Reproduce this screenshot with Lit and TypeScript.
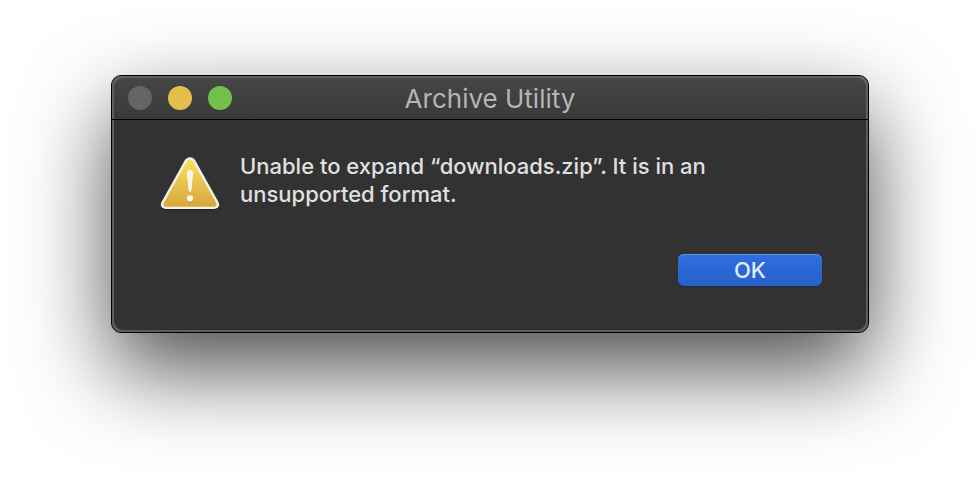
import { LitElement, html, css } from "lit";
import { customElement, property } from "lit/decorators.js";

@customElement("warning-icon")
class WarningIcon extends LitElement {
  static styles = css`
    :host { display: block; flex: none; width: 60px; height: 56px; }
    svg { display: block; width: 100%; height: 100%; }
  `;
  render() {
    return html`
      <svg viewBox="0 0 60 56" role="img" aria-label="Warning">
        <defs>
          <linearGradient id="fill" x1="0" y1="0" x2="0" y2="1">
            <stop offset="0" stop-color="#fae258" />
            <stop offset="0.5" stop-color="#e8c34f" />
            <stop offset="1" stop-color="#d6a93b" />
          </linearGradient>
        </defs>
        <path d="M24.800 5.500C27.200 1.400 32.800 1.400 35.200 5.500L58.200 46.500C60.500 50.800 58.500 54.200 54 54.200H6C1.500 54.200 -.5 50.800 1.800 46.500Z" fill="#181818" opacity=".5" />
        <path d="M24.800 4.200C27.200 .1 32.800 .1 35.200 4.200L58.200 45.500C60.500 49.800 58.500 53 54 53H6C1.500 53 -.5 49.800 1.800 45.500Z" fill="#f4f1e8" />
        <path d="M26.800 5.800C28.400 3.200 31.600 3.200 33.200 5.800L56 46.500C57.400 49.200 56.300 50.700 53.500 50.700H6.500C3.700 50.700 2.600 49.200 4 46.500Z" fill="url(#fill)" />
        <path d="M26.600 18Q26.800 15 30 15Q33.400 15 33.400 18L31.700 34Q31.400 36.500 30 36.500Q28.600 36.500 28.300 34Z" fill="#b98b2b" />
        <circle cx="30" cy="43.300" r="3.400" fill="#b98b2b" />
        <path d="M26.600 17Q26.800 14 30 14Q33.400 14 33.400 17L31.700 33.500Q31.400 36 30 36Q28.600 36 28.300 33.500Z" fill="#faf6e6" />
        <circle cx="30" cy="42.400" r="3.200" fill="#faf6e6" />
      </svg>
    `;
  }
}

@customElement("app-root")
class AppRoot extends LitElement {
  @property() heading = "Archive Utility";
  @property() message = "Unable to expand “downloads.zip”. It is in an unsupported format.";

  static styles = css`
    :host {
      display: flow-root;
      overflow: hidden;
      box-sizing: border-box;
      min-height: 100vh;
      padding: 75px 111px;
      background: #fff;
      font-family: Inter, "Liberation Sans", sans-serif;
    }
    .window {
      border: 1px solid #000;
      border-radius: 10px;
      background: #323232;
      box-shadow: 0 36px 88px rgba(0, 0, 0, 0.7);
    }
    .titlebar {
      display: grid;
      grid-template-columns: 1fr auto 1fr;
      align-items: center;
      height: 43px;
      padding: 0 16px;
      border-bottom: 1px solid #000;
      border-radius: 9px 9px 0 0;
      background: linear-gradient(#474747, #393939);
      box-shadow: inset 2px 2px #606060, inset -2px 2px #606060;
    }
    .controls { display: flex; gap: 16px; }
    .control {
      width: 24px;
      height: 24px;
      padding: 0;
      border: 0;
      border-radius: 50%;
    }
    .close { background: #656565; }
    .minimize { background: #e3c04d; }
    .zoom { background: #73c04b; }
    h1 {
      margin: 0;
      padding-top: 2px;
      font-size: 26px;
      line-height: 32px;
      font-weight: 400;
      color: #b5b5b5;
    }
    .body {
      padding: 32px 46px 46px 48px;
      border-radius: 0 0 9px 9px;
      box-shadow: inset 2px -2px #5c5c5c, inset -2px -2px #5c5c5c;
    }
    .alert { display: flex; gap: 20px; }
    warning-icon { margin-top: 4px; }
    p {
      margin: 0;
      font-size: 22px;
      line-height: 28px;
      font-weight: 500;
      color: #e0e0e0;
    }
    .actions { display: flex; justify-content: flex-end; margin-top: 42px; }
    .ok {
      width: 144px;
      height: 32px;
      padding: 0;
      border: 0;
      border-radius: 6px;
      background: linear-gradient(#2f6fde, #2760ca);
      box-shadow: inset 0 1px #6293e5, 0 1px 1px #1c2940;
      font: 500 22px/32px Inter, "Liberation Sans", sans-serif;
      color: #e2ecfb;
    }
  `;

  render() {
    return html`
      <section class="window" role="alertdialog" aria-labelledby="title" aria-describedby="message">
        <header class="titlebar">
          <div class="controls">
            <button class="control close" aria-label="Close"></button>
            <button class="control minimize" aria-label="Minimize"></button>
            <button class="control zoom" aria-label="Zoom"></button>
          </div>
          <h1 id="title">${this.heading}</h1>
        </header>
        <div class="body">
          <div class="alert">
            <warning-icon></warning-icon>
            <p id="message">${this.message}</p>
          </div>
          <div class="actions"><button class="ok">OK</button></div>
        </div>
      </section>
    `;
  }
}
